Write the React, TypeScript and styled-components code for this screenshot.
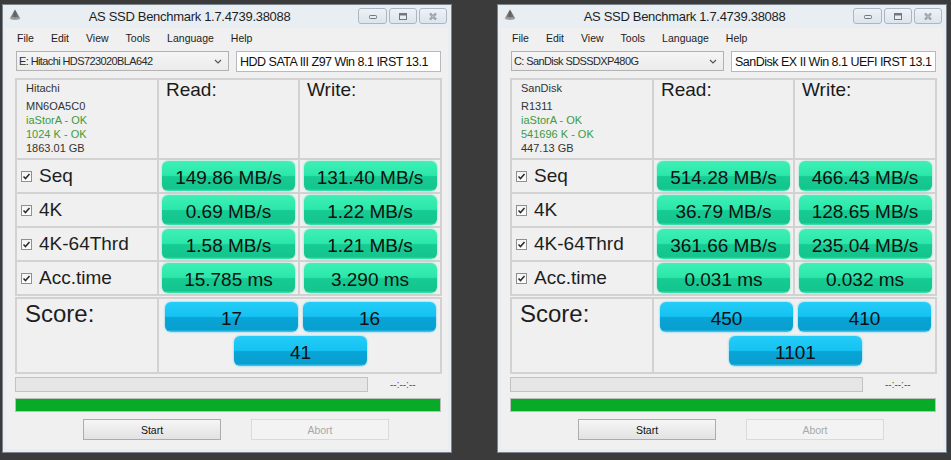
import React from "react";
import styled, { createGlobalStyle } from "styled-components";

const GlobalStyle = createGlobalStyle`
  html, body { margin: 0; padding: 0; background: #3b3b3b; }
  body { width: 951px; height: 460px; overflow: hidden; font-family: "Liberation Sans", Arial, sans-serif; }
  * { box-sizing: border-box; }
`;

const Desktop = styled.div`
  display: flex;
  gap: 45px;
  padding: 4px 0 0 2px;
`;

const Window = styled.div`
  width: 450px;
  height: 449px;
  border: 1px solid #7b838c;
  background: #e9eef3;
  padding: 0 3px 3px 3px;
  display: flex;
  flex-direction: column;
`;

const TitleBar = styled.div`
  height: 23px;
  display: flex;
  align-items: flex-start;
  flex-shrink: 0;
`;

const AppIcon = styled.div`
  margin: 4px 0 0 3px;
  width: 12px;
  height: 12px;
  display: flex;
`;

const TitleText = styled.div`
  flex: 1;
  text-align: center;
  font-size: 13px;
  letter-spacing: -0.3px;
  line-height: 24px;
  color: #1e1e1e;
`;

const Controls = styled.div`
  display: flex;
  gap: 2px;
  margin: 3px 1px 0 0;
`;

const CtrlButton = styled.div<{ $w: number }>`
  width: ${(p) => p.$w}px;
  height: 16px;
  border: 1px solid #a9b6c4;
  border-radius: 3px;
  background: linear-gradient(#eef2f6, #dde4ec);
  display: flex;
  align-items: center;
  justify-content: center;
`;

const Client = styled.div`
  flex: 1;
  background: #f0f0f0;
  display: flex;
  flex-direction: column;
  padding: 0 6px 0 9px;
`;

const MenuBar = styled.div`
  height: 19px;
  display: flex;
  align-items: center;
  gap: 17px;
  padding-left: 2px;
  font-size: 10.5px;
  color: #1c1c1c;
`;

const MenuItem = styled.span``;

const InputRow = styled.div`
  margin-top: 4px;
  height: 20px;
  display: flex;
  gap: 7px;
  padding: 0 1px;
`;

const Combo = styled.div`
  width: 213px;
  height: 20px;
  border: 1px solid #b2b2b2;
  background: linear-gradient(#f5f5f5, #ebebeb);
  display: flex;
  align-items: center;
  padding: 0 6px 0 2px;
  font-size: 11px;
  letter-spacing: -0.6px;
  color: #2a2a2a;
`;

const ComboText = styled.span`
  flex: 1;
  white-space: nowrap;
  overflow: hidden;
`;

const TextField = styled.div`
  flex: 1;
  height: 21px;
  border: 1px solid #b6b9bf;
  background: #ffffff;
  display: flex;
  align-items: center;
  padding-left: 3px;
  font-size: 12.5px;
  letter-spacing: -0.5px;
  color: #111;
  white-space: nowrap;
  overflow: hidden;
`;

const ResultTable = styled.div`
  margin-top: 7px;
  display: grid;
  grid-template-columns: 140px 139px 140px;
  grid-template-rows: 78px repeat(4, 32px);
  gap: 2px;
  padding: 2px;
  background: #d2d2d2;
  width: 427px;
`;

const ScoreTable = styled.div`
  margin-top: 1px;
  display: grid;
  grid-template-columns: 140px 281px;
  grid-template-rows: 73px;
  gap: 2px;
  padding: 2px;
  background: #d2d2d2;
  width: 427px;
`;

const Cell = styled.div`
  background: #f0f0f0;
`;

const InfoCell = styled(Cell)`
  padding: 1px 0 0 9px;
  font-size: 11px;
  line-height: 14px;
  color: #333;
`;

const InfoLine = styled.div<{ $ok?: boolean; $first?: boolean }>`
  color: ${(p) => (p.$ok ? "#3f9a3f" : "#333")};
  margin-bottom: ${(p) => (p.$first ? "4px" : "0")};
  white-space: nowrap;
`;

const HeaderCell = styled(Cell)`
  padding: 0 0 0 7px;
  font-size: 19px;
  line-height: 20px;
  color: #1a1a1a;
`;

const LabelCell = styled(Cell)`
  display: flex;
  align-items: center;
  padding-left: 4px;
  gap: 7px;
  font-size: 19px;
  color: #1e1e1e;
`;

const CheckBox = styled.div`
  width: 11px;
  height: 11px;
  border: 1px solid #8f8f8f;
  background: linear-gradient(#f4f4f4, #ffffff);
  display: flex;
  align-items: center;
  justify-content: center;
`;

const BarCell = styled(Cell)`
  display: flex;
  align-items: center;
  justify-content: center;
`;

const ValueBar = styled.div<{ $kind: "green" | "blue" }>`
  width: 133px;
  height: 30px;
  padding-top: 3px;
  border-radius: 6px;
  display: flex;
  align-items: center;
  justify-content: center;
  font-size: 19px;
  color: #101010;
  background: ${(p) =>
    p.$kind === "green"
      ? "linear-gradient(#3ef0b6 0%, #2ce7aa 48%, #16cc93 52%, #14c48d 92%, #3fe4b0 100%)"
      : "linear-gradient(#24cdf8 0%, #15c2f3 48%, #08a5d6 52%, #089fcf 92%, #3ccdf5 100%)"};
  box-shadow: 0 0 2px
    ${(p) => (p.$kind === "green" ? "rgba(60, 230, 170, 0.8)" : "rgba(40, 190, 240, 0.8)")};
`;

const ScoreLabel = styled(Cell)`
  padding: 1px 0 0 8px;
  font-size: 24px;
  line-height: 28px;
  color: #1e1e1e;
`;

const ScoreCell = styled(Cell)`
  display: flex;
  flex-wrap: wrap;
  justify-content: center;
  align-content: flex-start;
  gap: 4px 5px;
  padding: 3px 0 0 2px;
`;

const ProgressRow = styled.div`
  margin-top: 3px;
  height: 15px;
  display: flex;
  align-items: center;
`;

const ProgressTrack = styled.div`
  width: 353px;
  height: 15px;
  border: 1px solid #c2c2c2;
  background: #e6e6e6;
`;

const TimeText = styled.span`
  margin-left: 22px;
  font-size: 10px;
  color: #555;
`;

const DoneBar = styled.div`
  margin-top: 6px;
  width: 426px;
  height: 14px;
  border: 1px solid #b8c0b8;
  background: #07ab27;
`;

const ButtonRow = styled.div`
  margin-top: 7px;
  display: flex;
  gap: 30px;
  padding-left: 68px;
`;

const PushButton = styled.div<{ $disabled?: boolean }>`
  width: 138px;
  height: 21px;
  display: flex;
  align-items: center;
  justify-content: center;
  font-size: 10.5px;
  border: 1px solid ${(p) => (p.$disabled ? "#dadada" : "#acacac")};
  background: ${(p) => (p.$disabled ? "#f3f3f3" : "linear-gradient(#f6f6f6, #e2e2e2)")};
  color: ${(p) => (p.$disabled ? "#a8a8a8" : "#111")};
`;

const Logo = () => (
  <svg width="12" height="12" viewBox="0 0 12 12">
    <defs>
      <linearGradient id="cone" x1="0" x2="1" y1="0" y2="0">
        <stop offset="0" stopColor="#9a9a9a" />
        <stop offset="0.5" stopColor="#5e5e5e" />
        <stop offset="1" stopColor="#8a8a8a" />
      </linearGradient>
    </defs>
    <path d="M6 0.5 L11.3 9.5 Q6 12.2 0.7 9.5 Z" fill="url(#cone)" />
    <ellipse cx="6" cy="9.6" rx="5.2" ry="1.5" fill="#b8b8b8" opacity="0.6" />
  </svg>
);

const MinIcon = () => (
  <svg width="10" height="8" viewBox="0 0 10 8">
    <rect x="1.5" y="3.5" width="7" height="3" rx="0.8" fill="#e8edf2" stroke="#6c7886" />
  </svg>
);

const MaxIcon = () => (
  <svg width="10" height="9" viewBox="0 0 10 9">
    <rect x="1.5" y="1.5" width="7" height="6" fill="#e8edf2" stroke="#6c7886" />
    <rect x="1.5" y="1.5" width="7" height="2" fill="#6c7886" />
  </svg>
);

const CloseIcon = () => (
  <svg width="10" height="9" viewBox="0 0 10 9">
    <path d="M2 1.5 L8 7.5 M8 1.5 L2 7.5" stroke="#7c8895" strokeWidth="2.2" />
    <path d="M2 1.5 L8 7.5 M8 1.5 L2 7.5" stroke="#dfe5eb" strokeWidth="0.8" />
  </svg>
);

const Chevron = () => (
  <svg width="8" height="5" viewBox="0 0 8 5">
    <path d="M1 1 L4 4 L7 1" stroke="#555" strokeWidth="1.2" fill="none" />
  </svg>
);

const Check = () => (
  <svg width="9" height="9" viewBox="0 0 9 9">
    <path d="M1.5 4.5 L3.5 6.6 L7.5 2" stroke="#2b2b2b" strokeWidth="1.5" fill="none" />
  </svg>
);

type Bench = {
  drive: string;
  label: string;
  info: string[];
  rows: { name: string; read: string; write: string }[];
  scores: [string, string, string];
};

const benches: Bench[] = [
  {
    drive: "E: Hitachi HDS723020BLA642",
    label: "HDD SATA III Z97 Win 8.1 IRST 13.1",
    info: ["Hitachi", "MN6OA5C0", "iaStorA - OK", "1024 K - OK", "1863.01 GB"],
    rows: [
      { name: "Seq", read: "149.86 MB/s", write: "131.40 MB/s" },
      { name: "4K", read: "0.69 MB/s", write: "1.22 MB/s" },
      { name: "4K-64Thrd", read: "1.58 MB/s", write: "1.21 MB/s" },
      { name: "Acc.time", read: "15.785 ms", write: "3.290 ms" },
    ],
    scores: ["17", "16", "41"],
  },
  {
    drive: "C: SanDisk SDSSDXP480G",
    label: "SanDisk EX II Win 8.1 UEFI IRST 13.1",
    info: ["SanDisk", "R1311", "iaStorA - OK", "541696 K - OK", "447.13 GB"],
    rows: [
      { name: "Seq", read: "514.28 MB/s", write: "466.43 MB/s" },
      { name: "4K", read: "36.79 MB/s", write: "128.65 MB/s" },
      { name: "4K-64Thrd", read: "361.66 MB/s", write: "235.04 MB/s" },
      { name: "Acc.time", read: "0.031 ms", write: "0.032 ms" },
    ],
    scores: ["450", "410", "1101"],
  },
];

const menus = ["File", "Edit", "View", "Tools", "Language", "Help"];

const BenchWindow = ({ b }: { b: Bench }) => (
  <Window>
    <TitleBar>
      <AppIcon>
        <Logo />
      </AppIcon>
      <TitleText>AS SSD Benchmark 1.7.4739.38088</TitleText>
      <Controls>
        <CtrlButton $w={29}>
          <MinIcon />
        </CtrlButton>
        <CtrlButton $w={28}>
          <MaxIcon />
        </CtrlButton>
        <CtrlButton $w={28}>
          <CloseIcon />
        </CtrlButton>
      </Controls>
    </TitleBar>
    <Client>
      <MenuBar>
        {menus.map((m) => (
          <MenuItem key={m}>{m}</MenuItem>
        ))}
      </MenuBar>
      <InputRow>
        <Combo>
          <ComboText>{b.drive}</ComboText>
          <Chevron />
        </Combo>
        <TextField>{b.label}</TextField>
      </InputRow>
      <ResultTable>
        <InfoCell>
          {b.info.map((line, i) => (
            <InfoLine key={i} $first={i === 0} $ok={i === 2 || i === 3}>
              {line}
            </InfoLine>
          ))}
        </InfoCell>
        <HeaderCell>Read:</HeaderCell>
        <HeaderCell>Write:</HeaderCell>
        {b.rows.map((r) => (
          <React.Fragment key={r.name}>
            <LabelCell>
              <CheckBox>
                <Check />
              </CheckBox>
              {r.name}
            </LabelCell>
            <BarCell>
              <ValueBar $kind="green">{r.read}</ValueBar>
            </BarCell>
            <BarCell>
              <ValueBar $kind="green">{r.write}</ValueBar>
            </BarCell>
          </React.Fragment>
        ))}
      </ResultTable>
      <ScoreTable>
        <ScoreLabel>Score:</ScoreLabel>
        <ScoreCell>
          <ValueBar $kind="blue">{b.scores[0]}</ValueBar>
          <ValueBar $kind="blue">{b.scores[1]}</ValueBar>
          <ValueBar $kind="blue">{b.scores[2]}</ValueBar>
        </ScoreCell>
      </ScoreTable>
      <ProgressRow>
        <ProgressTrack />
        <TimeText>--:--:--</TimeText>
      </ProgressRow>
      <DoneBar />
      <ButtonRow>
        <PushButton>Start</PushButton>
        <PushButton $disabled>Abort</PushButton>
      </ButtonRow>
    </Client>
  </Window>
);

export default function App() {
  return (
    <>
      <GlobalStyle />
      <Desktop>
        {benches.map((b) => (
          <BenchWindow key={b.drive} b={b} />
        ))}
      </Desktop>
    </>
  );
}
